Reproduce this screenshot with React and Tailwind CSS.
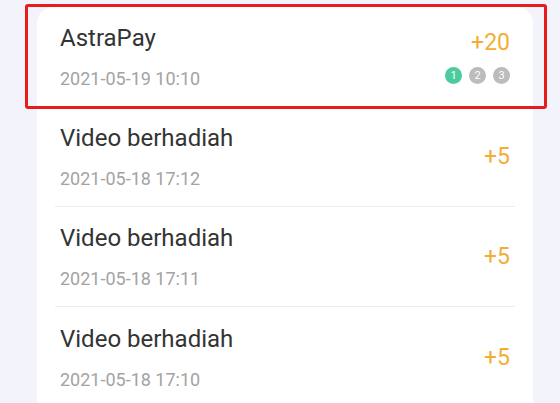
import React from 'react'

const ROWS = [
  { title: 'AstraPay', time: '2021-05-19 10:10', points: '+20', steps: true },
  { title: 'Video berhadiah', time: '2021-05-18 17:12', points: '+5' },
  { title: 'Video berhadiah', time: '2021-05-18 17:11', points: '+5' },
  { title: 'Video berhadiah', time: '2021-05-18 17:10', points: '+5' },
]

function Steps() {
  return (
    <div className="flex items-center gap-[7px]">
      {[1, 2, 3].map((n) => (
        <span
          key={n}
          className={
            n === 1
              ? 'w-[17px] h-[17px] rounded-full bg-[#4ccb9c] text-white text-[11px] leading-none flex items-center justify-center'
              : 'w-[17px] h-[17px] rounded-full bg-[#bcbcbc] text-white text-[11px] leading-none flex items-center justify-center'
          }
        >
          {n}
        </span>
      ))}
    </div>
  )
}

function Row({ row, last }) {
  return (
    <div className="px-[18px]">
      <div
        className={
          last
            ? 'h-[100px] flex items-center justify-between px-[5px]'
            : 'h-[100px] flex items-center justify-between px-[5px] border-b border-[#ececec]'
        }
      >
        <div className="flex flex-col gap-[17px]">
          <span className="text-[24px] leading-[28px] text-[#333333]">{row.title}</span>
          <span className="text-[18px] leading-[20px] text-[#a3a3a3]">{row.time}</span>
        </div>
        {row.steps ? (
          <div className="flex flex-col items-end gap-[11px]">
            <span className="text-[23px] leading-[27px] text-[#f4ad34]">{row.points}</span>
            <Steps />
          </div>
        ) : (
          <span className="text-[23px] leading-[27px] text-[#f4ad34]">{row.points}</span>
        )}
      </div>
    </div>
  )
}

export default function App() {
  return (
    <div
      className="relative h-[403px] w-[560px] overflow-hidden bg-[#f3f3fb] pt-[7px]"
      style={{ fontFamily: 'Roboto, "Noto Sans", sans-serif' }}
    >
      <div className="ml-[37px] mr-[27px] bg-white rounded-t-[16px]">
        {ROWS.map((row, i) => (
          <Row key={i} row={row} last={i === ROWS.length - 1} />
        ))}
      </div>

      {/* highlight box */}
      <div className="absolute left-[25px] top-[4px] w-[522px] h-[105px] border-[3px] border-[#e81c1c] rounded-[3px]" />
    </div>
  )
}
